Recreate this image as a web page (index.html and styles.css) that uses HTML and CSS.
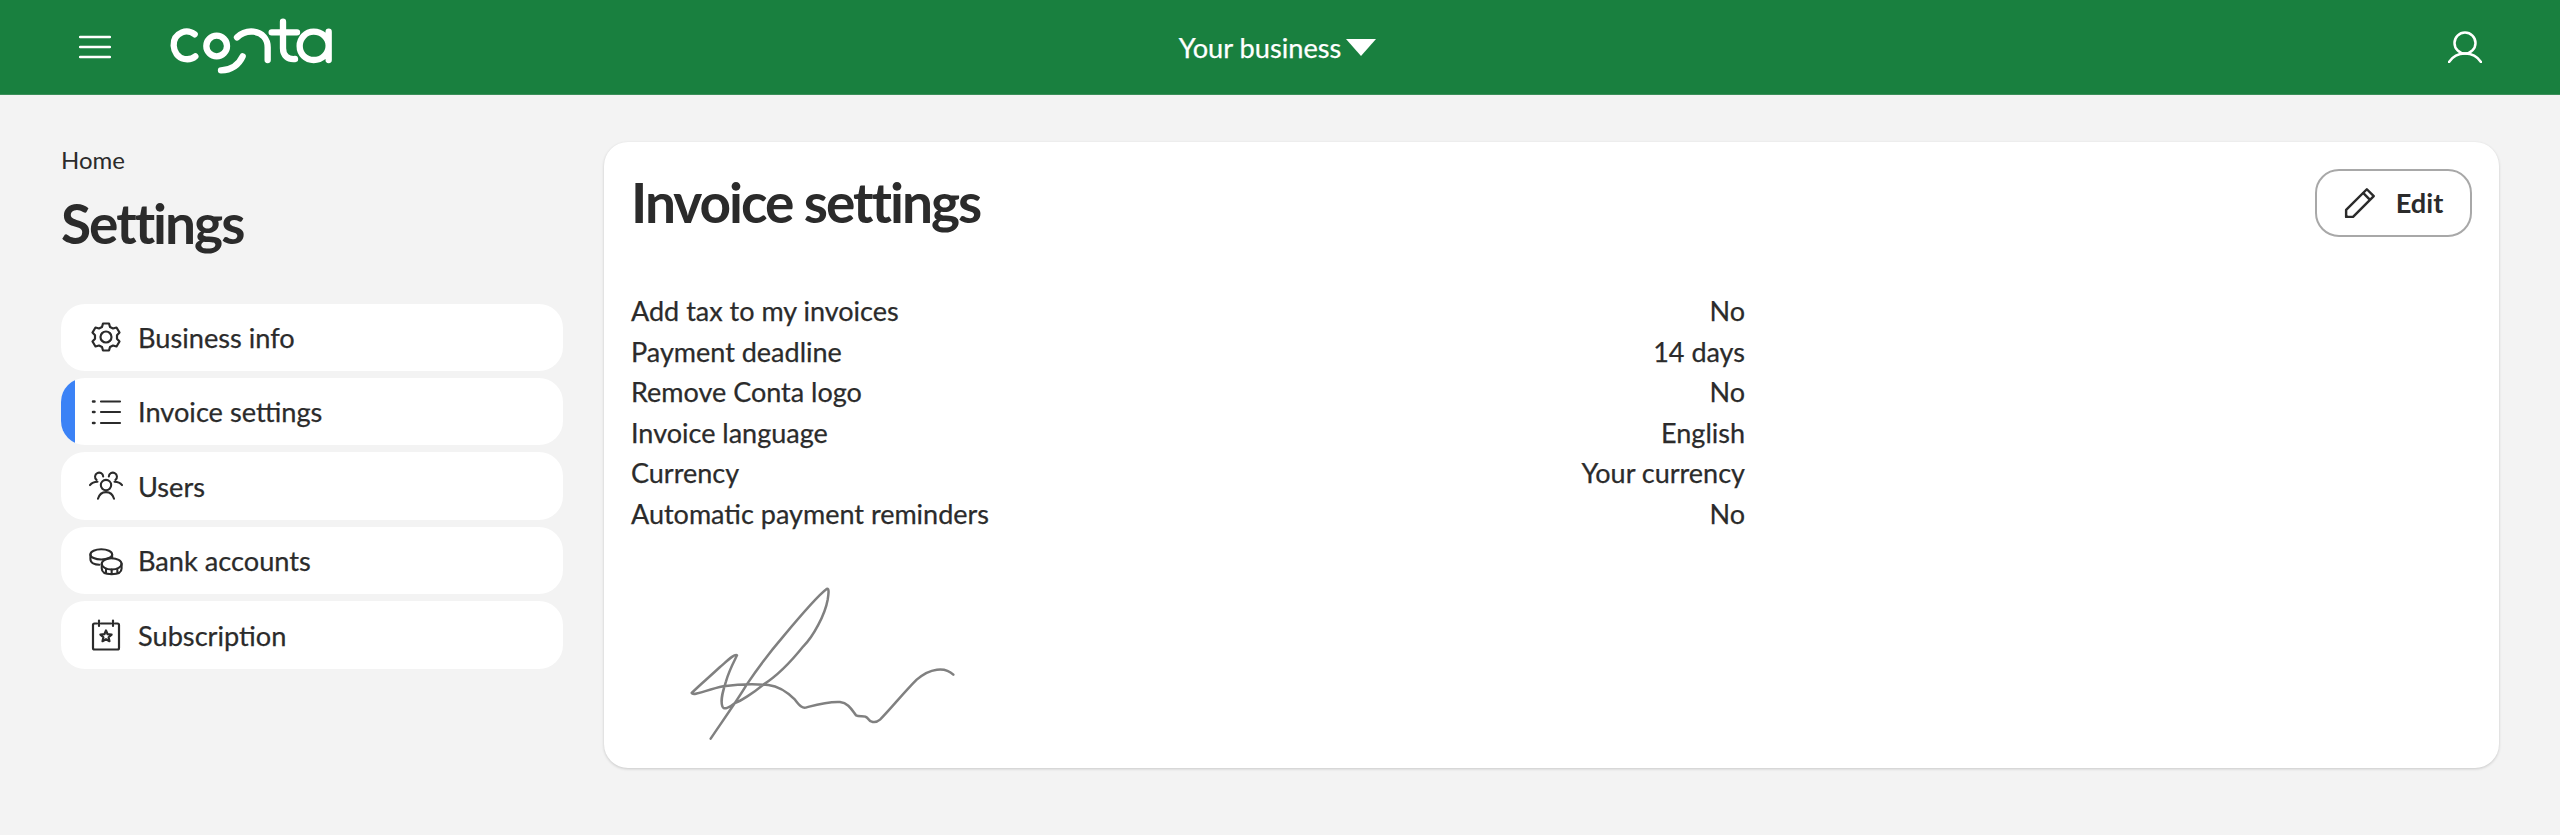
FILE: index.html
```html
<!DOCTYPE html>
<html lang="en">
<head>
<meta charset="utf-8">
<title>Invoice settings</title>
<link rel="stylesheet" href="styles.css">
</head>
<body>
<header class="topbar">
  <div class="topbar-left">
    <svg class="burger" viewBox="0 0 32 24" aria-hidden="true"><path d="M1 2h30M1 12h30M1 22h30"/></svg>
    <svg class="logo" viewBox="0 0 600 240" aria-hidden="true">
      <path d="M131 76C118 66 105 65 93 70C76 77 67 92 68 110C69 128 80 146 100 150C112 152 124 150 133 142"/>
      <circle cx="197" cy="111" r="31"/>
      <path d="M275 142C262 170 240 183 210 184"/>
      <path d="M258 85C272 72 290 66 308 68C334 71 350 90 350 115V153"/>
      <path d="M396 38V118C396 140 410 152 432 150M362 70H438"/>
      <path d="M533 68V153M533 110C533 86 512 68 488 68C464 68 446 88 446 111C446 135 464 153 488 153C512 153 533 135 533 110"/>
    </svg>
  </div>
  <div class="business">Your business<span class="caret"></span></div>
  <svg class="user" viewBox="0 0 34 32" aria-hidden="true"><circle cx="17" cy="12" r="10.5"/><path d="M1 31C5 25 10 22.500 17 22.500S29 25 33 31"/></svg>
</header>
<div class="page">
  <aside class="sidebar">
    <div class="crumb">Home</div>
    <h1 class="page-title">Settings</h1>
    <nav class="menu">
      <a class="menu-item">
        <svg class="icon" viewBox="0 0 32 32"><path d="M13 2.500h6l1 3.500 3 1.500 3.500-1 3 5-2.500 2.800v3.400l2.500 2.800-3 5-3.500-1-3 1.500-1 3.500h-6l-1-3.500-3-1.500-3.500 1-3-5 2.500-2.800v-3.400L2.500 11.500l3-5 3.500 1 3-1.500z"/><circle cx="16" cy="16" r="5.500"/></svg>
        <span>Business info</span>
      </a>
      <a class="menu-item active">
        <svg class="icon" viewBox="0 0 32 32"><path d="M11 5.500h19M11 16h19M11 27h19"/><path class="dots" d="M3 5.500h1.500M3 16h1.500M3 27h1.500"/></svg>
        <span>Invoice settings</span>
      </a>
      <a class="menu-item">
        <svg class="icon wide" viewBox="0 0 36 32"><circle cx="18" cy="15" r="5.500"/><path d="M9.500 29.500C11 24.500 14 22.500 18 22.500S25 24.500 26.500 29.500"/><path d="M8 9.500A4.300 4.300 0 1 1 15 6M28 9.500A4.300 4.300 0 1 0 21 6"/><path d="M1 15C3 12.500 5 11.500 9 11.500M35 15C33 12.500 31 11.500 27 11.500"/></svg>
        <span>Users</span>
      </a>
      <a class="menu-item">
        <svg class="icon wide" viewBox="0 0 36 32"><ellipse cx="13" cy="9" rx="11.500" ry="5.500"/><path d="M1.500 9V14C1.500 18 6 20 11 20"/><ellipse cx="24" cy="19" rx="10.500" ry="6"/><path d="M13.500 19V24C13.500 28 18 30 24 30S34.500 28 34.500 24V19M24 25V30M18 25v4M30 25v4M24.500 9V13"/></svg>
        <span>Bank accounts</span>
      </a>
      <a class="menu-item">
        <svg class="icon" viewBox="0 0 32 32"><path d="M7 4.500H4.500C3.500 4.500 3 5 3 6V29C3 30 3.500 30.500 4.500 30.500H27.500C28.500 30.500 29 30 29 29V6C29 5 28.500 4.500 27.500 4.500H25M11 4.500H21M9 1.500V7M23 1.500V7"/><path d="M16 11.500l1.600 3.700 4 .4-3 2.700.9 3.900-3.500-2-3.500 2 .9-3.900-3-2.700 4-.4z"/></svg>
        <span>Subscription</span>
      </a>
    </nav>
  </aside>
  <main class="card">
    <div class="card-head">
      <h2 class="card-title">Invoice settings</h2>
      <button class="edit" type="button">
        <svg class="edit-icon" viewBox="0 0 32 32"><path d="M2 30V23.500L21.500 4 28 10.500 8.500 30H4C2.500 30 2 29.500 2 28zM18 7.500L24.500 14"/></svg>
        Edit
      </button>
    </div>
    <dl class="rows">
      <div class="row"><dt>Add tax to my invoices</dt><dd>No</dd></div>
      <div class="row"><dt>Payment deadline</dt><dd>14 days</dd></div>
      <div class="row"><dt>Remove Conta logo</dt><dd>No</dd></div>
      <div class="row"><dt>Invoice language</dt><dd>English</dd></div>
      <div class="row"><dt>Currency</dt><dd>Your currency</dd></div>
      <div class="row"><dt>Automatic payment reminders</dt><dd>No</dd></div>
    </dl>
    <svg class="signature" viewBox="0 0 1020 600" aria-hidden="true"><path d="M212 512C240 470 290 400 320 350C360 290 400 240 430 205C480 145 530 85 560 63C568 60 566 75 563 95C555 140 520 205 490 235C450 285 410 325 370 350C340 375 300 400 285 405C270 418 250 428 247 415C240 395 250 365 258 340C268 305 285 275 291 262C285 255 260 280 240 297C210 325 175 355 155 375C160 385 200 365 250 355C300 348 350 348 385 351C420 355 445 375 465 395C480 415 488 422 500 418C530 410 565 400 600 402C625 405 635 425 648 442C660 448 675 440 682 450C690 462 705 468 720 455C750 425 790 375 830 335C870 300 915 295 940 320"/></svg>
  </main>
</div>
</body>
</html>
```
FILE: styles.css
```css
* { box-sizing: border-box; }
html, body { margin: 0; height: 100%; }
body {
  background: #f3f3f3;
  color: #2b2b2b;
  font-family: Lato, "Open Sans", sans-serif;
  font-size: 27px;
}
.topbar {
  height: 95px;
  background: #19803f;
  border-bottom: 1px solid #3b8f5a;
  color: #fff;
  display: grid;
  grid-template-columns: 1fr auto 1fr;
  align-items: center;
  padding: 0 78px 0 73px;
}
.topbar-left { display: flex; align-items: center; gap: 40px; margin-left: 6px; }
.burger { width: 32px; height: 24px; fill: none; stroke: #fff; stroke-width: 2.5; stroke-linecap: round; }
.logo { width: 200px; height: 80px; margin-top: 4px; fill: none; stroke: #fff; stroke-width: 19; stroke-linecap: round; stroke-linejoin: round; }
.business { font-size: 27.2px; display: flex; align-items: center; gap: 5px; -webkit-text-stroke: .25px #fff; }
.caret { width: 0; height: 0; border-left: 15px solid transparent; border-right: 15px solid transparent; border-top: 17px solid #fff; }
.user { justify-self: end; width: 34px; height: 32px; fill: none; stroke: #fff; stroke-width: 2.500; stroke-linecap: round; }
.page { display: flex; gap: 41px; padding: 47px 61px 0; align-items: flex-start; }
.sidebar { width: 502px; flex: none; }
.crumb { font-size: 24px; line-height: 30px; margin-top: 3px; }
.page-title { font-size: 55px; line-height: 66px; margin: 15px 0 47.500px; font-weight: 700; letter-spacing: -2px; }
.menu { display: flex; flex-direction: column; gap: 7.300px; font-size: 27.2px; }
.menu-item { height: 67.200px; background: #fff; border-radius: 24px; display: flex; align-items: center; gap: 15px; padding-left: 28px; overflow: hidden; position: relative; -webkit-text-stroke: .25px #2b2b2b; }
.menu-item.active::before { content: ""; position: absolute; left: 0; top: 0; bottom: 0; width: 14px; background: #3b82f6; }
.icon { width: 34px; height: 32px; flex: none; fill: none; stroke: #2b2b2b; stroke-width: 2.2; stroke-linecap: round; stroke-linejoin: round; }
.dots { stroke-width: 2.500; }
.card {
  flex: 1;
  height: 626px;
  background: #fff;
  border-radius: 24px;
  box-shadow: 0 1px 3px rgba(0, 0, 0, .18);
  padding: 27px 27px;
}
.card-head { display: flex; justify-content: space-between; align-items: flex-start; }
.card-title { margin: -1px 0 1px; font-size: 55px; line-height: 68px; font-weight: 700; letter-spacing: -2px; }
.edit {
  width: 157px; height: 68px;
  border: 2px solid #a8a8a8;
  border-radius: 24px;
  background: #fff;
  color: #2b2b2b;
  font: 700 27.2px Lato, sans-serif;
  display: flex; align-items: center; justify-content: center; gap: 18px;
  padding: 0 0 2px;
}
.edit-icon { width: 34px; height: 34px; fill: none; stroke: #2b2b2b; stroke-width: 2.300; stroke-linejoin: round; stroke-linecap: round; }
.rows { width: 1114px; margin: 54px 0 0; -webkit-text-stroke: .25px #2b2b2b; }
.row { display: flex; justify-content: space-between; line-height: 40.600px; }
.row dd { margin: 0; }
.signature { display: block; width: 340px; height: 200px; margin: 33px 0 0 9px; fill: none; stroke: #808080; stroke-width: 7.500; stroke-linecap: round; stroke-linejoin: round; }
```
